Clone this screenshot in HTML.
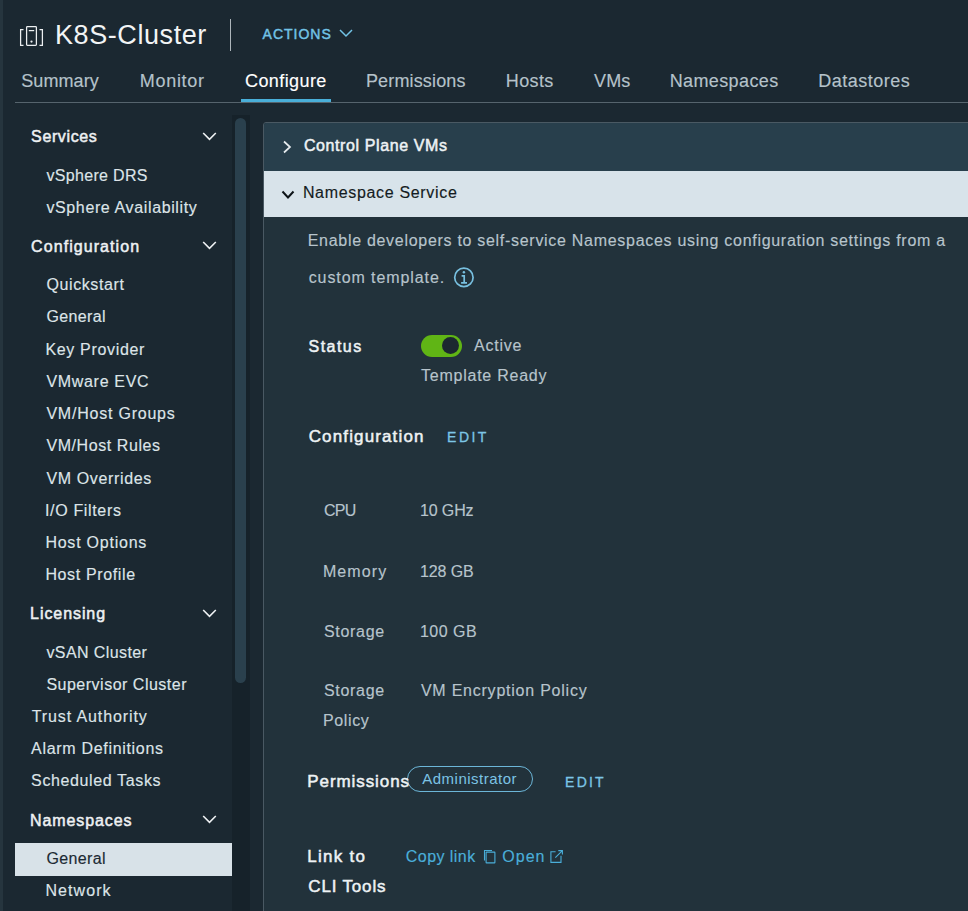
<!DOCTYPE html>
<html><head><meta charset="utf-8"><style>
html,body{margin:0;padding:0;width:968px;height:911px;overflow:hidden;background:#1b2831;font-family:"Liberation Sans", sans-serif;}
.a{position:absolute;}
.t{position:absolute;white-space:nowrap;}
</style></head><body>
<div class="a" style="left:0;top:0;width:3px;height:911px;background:#26353e"></div>
<svg class="a" style="left:0;top:0" width="60" height="60" viewBox="0 0 60 60" fill="none" stroke="#eceff1" stroke-width="1.25"><path d="M23.5 29.5H20.6V45.4H23.5"/><path d="M39.5 29.5H42.4V45.4H39.5"/><rect x="26.6" y="26.6" width="9.8" height="18.8" rx="0.8"/><path d="M28.8 30.6H34.2"/><circle cx="31.5" cy="41.6" r="1.15" fill="#eceff1" stroke="none"/></svg>
<div class="a" style="left:230px;top:19px;width:1px;height:32px;background:#aeb6bb"></div>
<svg class="a" style="left:339px;top:28.7px" width="14" height="9" viewBox="0 0 14 9" fill="none" stroke="#72c3e6" stroke-width="1.5"><path d="M1 1l6 6 6-6"/></svg>
<div class="a" style="left:15px;top:102px;width:953px;height:1px;background:#56646d"></div>
<div class="a" style="left:241px;top:99px;width:90px;height:3px;background:#49afd9"></div>
<div class="a" style="left:232px;top:115px;width:18px;height:796px;background:#16222a"></div>
<div class="a" style="left:235px;top:118px;width:11px;height:565px;border-radius:6px;background:#2a404d"></div>
<div class="a" style="left:15px;top:843px;width:217px;height:33px;background:#d8e2e8"></div>
<svg class="a" style="left:202.3px;top:132.0px" width="15" height="9" viewBox="0 0 15 9" fill="none" stroke="#eef1f3" stroke-width="1.6"><path d="M1.2 1l6.3 6.3 6.3-6.3"/></svg>
<svg class="a" style="left:202.3px;top:241.2px" width="15" height="9" viewBox="0 0 15 9" fill="none" stroke="#eef1f3" stroke-width="1.6"><path d="M1.2 1l6.3 6.3 6.3-6.3"/></svg>
<svg class="a" style="left:202.3px;top:608.7px" width="15" height="9" viewBox="0 0 15 9" fill="none" stroke="#eef1f3" stroke-width="1.6"><path d="M1.2 1l6.3 6.3 6.3-6.3"/></svg>
<svg class="a" style="left:202.3px;top:815.2px" width="15" height="9" viewBox="0 0 15 9" fill="none" stroke="#eef1f3" stroke-width="1.6"><path d="M1.2 1l6.3 6.3 6.3-6.3"/></svg>
<div class="a" style="left:263px;top:122px;width:720px;height:800px;border:1px solid #4a5963;border-radius:3px;background:#22323b;box-sizing:border-box"></div>
<div class="a" style="left:264px;top:123px;width:704px;height:48px;background:#283f4c;border-top-left-radius:2px"></div>
<div class="a" style="left:264px;top:171px;width:704px;height:46px;background:#d8e3ea"></div>
<svg class="a" style="left:282px;top:140px" width="10" height="14" viewBox="0 0 10 14" fill="none" stroke="#e6ebee" stroke-width="1.7"><path d="M2 1.5l6 5.5-6 5.5"/></svg>
<svg class="a" style="left:280.5px;top:188.5px" width="14" height="11" viewBox="0 0 14 11" fill="none" stroke="#0e1418" stroke-width="2"><path d="M1.5 2.5l5.5 6 5.5-6"/></svg>
<svg class="a" style="left:453px;top:267px" width="22" height="22" viewBox="0 0 22 22" fill="none" stroke="#78c0e0" stroke-width="1.7"><circle cx="10.9" cy="10.4" r="9.2"/><path d="M8.6 8.9H11.2V15.9M8.1 15.9H14"/><circle cx="10.9" cy="5.3" r="1.25" fill="#78c0e0" stroke="none"/></svg>
<div class="a" style="left:421px;top:335px;width:41px;height:22px;border-radius:11px;background:#60b515"></div>
<div class="a" style="left:442px;top:337px;width:17px;height:17px;border-radius:50%;background:#1c2830"></div>
<div class="a" style="left:406.5px;top:766px;width:126.5px;height:26px;border:1px solid #6cb6d8;border-radius:13px;box-sizing:border-box"></div>
<svg class="a" style="left:483px;top:849px" width="14" height="15" viewBox="0 0 14 15" fill="none" stroke="#4aaed9" stroke-width="1.1"><rect x="3.1" y="3.1" width="8.8" height="10.8" rx="0.4"/><path d="M1.5 11.4V1.5H9"/></svg>
<svg class="a" style="left:549px;top:849px" width="15" height="15" viewBox="0 0 15 15" fill="none" stroke="#4aaed9" stroke-width="1.1"><path d="M6.6 2.7H1.9V13.4H12V6.8"/><path d="M6.3 8.6L13.4 1.6M9.3 1.6H13.4V5.4"/></svg>
<span class="t" style="left:55.00px;top:18px;font-size:27px;line-height:34px;color:#f2f4f5;letter-spacing:0.574px;">K8S-Cluster</span>
<span class="t" style="left:262.60px;top:25px;font-size:14px;line-height:18px;color:#72c3e6;letter-spacing:0.985px;-webkit-text-stroke:0.45px #72c3e6;">ACTIONS</span>
<span class="t" style="left:21.20px;top:70px;font-size:18px;line-height:22px;color:#b5c2ca;letter-spacing:0.098px;-webkit-text-stroke:0.15px #b5c2ca;">Summary</span>
<span class="t" style="left:139.70px;top:70px;font-size:18px;line-height:22px;color:#b5c2ca;letter-spacing:0.729px;-webkit-text-stroke:0.15px #b5c2ca;">Monitor</span>
<span class="t" style="left:245.00px;top:70px;font-size:18px;line-height:22px;color:#ffffff;letter-spacing:0.408px;-webkit-text-stroke:0.15px #ffffff;">Configure</span>
<span class="t" style="left:365.90px;top:70px;font-size:18px;line-height:22px;color:#b5c2ca;letter-spacing:0.158px;-webkit-text-stroke:0.15px #b5c2ca;">Permissions</span>
<span class="t" style="left:505.80px;top:70px;font-size:18px;line-height:22px;color:#b5c2ca;letter-spacing:0.372px;-webkit-text-stroke:0.15px #b5c2ca;">Hosts</span>
<span class="t" style="left:594.10px;top:70px;font-size:18px;line-height:22px;color:#b5c2ca;letter-spacing:0.050px;-webkit-text-stroke:0.15px #b5c2ca;">VMs</span>
<span class="t" style="left:669.70px;top:70px;font-size:18px;line-height:22px;color:#b5c2ca;letter-spacing:0.384px;-webkit-text-stroke:0.15px #b5c2ca;">Namespaces</span>
<span class="t" style="left:818.30px;top:70px;font-size:18px;line-height:22px;color:#b5c2ca;letter-spacing:0.496px;-webkit-text-stroke:0.15px #b5c2ca;">Datastores</span>
<span class="t" style="left:31.10px;top:127px;font-size:16px;line-height:20px;color:#eef1f3;letter-spacing:0.621px;-webkit-text-stroke:0.5px #eef1f3;">Services</span>
<span class="t" style="left:31.10px;top:237px;font-size:16px;line-height:20px;color:#eef1f3;letter-spacing:1.069px;-webkit-text-stroke:0.5px #eef1f3;">Configuration</span>
<span class="t" style="left:30.10px;top:604px;font-size:16px;line-height:20px;color:#eef1f3;letter-spacing:0.925px;-webkit-text-stroke:0.5px #eef1f3;">Licensing</span>
<span class="t" style="left:30.10px;top:811px;font-size:16px;line-height:20px;color:#eef1f3;letter-spacing:0.892px;-webkit-text-stroke:0.5px #eef1f3;">Namespaces</span>
<span class="t" style="left:46.40px;top:166px;font-size:16px;line-height:20px;color:#dde4e8;letter-spacing:0.325px;-webkit-text-stroke:0.15px #dde4e8;">vSphere DRS</span>
<span class="t" style="left:46.40px;top:198px;font-size:16px;line-height:20px;color:#dde4e8;letter-spacing:0.630px;-webkit-text-stroke:0.15px #dde4e8;">vSphere Availability</span>
<span class="t" style="left:46.40px;top:275px;font-size:16px;line-height:20px;color:#dde4e8;letter-spacing:0.614px;-webkit-text-stroke:0.15px #dde4e8;">Quickstart</span>
<span class="t" style="left:46.40px;top:307px;font-size:16px;line-height:20px;color:#dde4e8;letter-spacing:0.355px;-webkit-text-stroke:0.15px #dde4e8;">General</span>
<span class="t" style="left:45.40px;top:340px;font-size:16px;line-height:20px;color:#dde4e8;letter-spacing:0.676px;-webkit-text-stroke:0.15px #dde4e8;">Key Provider</span>
<span class="t" style="left:46.40px;top:372px;font-size:16px;line-height:20px;color:#dde4e8;letter-spacing:0.692px;-webkit-text-stroke:0.15px #dde4e8;">VMware EVC</span>
<span class="t" style="left:46.40px;top:404px;font-size:16px;line-height:20px;color:#dde4e8;letter-spacing:0.780px;-webkit-text-stroke:0.15px #dde4e8;">VM/Host Groups</span>
<span class="t" style="left:46.40px;top:436px;font-size:16px;line-height:20px;color:#dde4e8;letter-spacing:0.575px;-webkit-text-stroke:0.15px #dde4e8;">VM/Host Rules</span>
<span class="t" style="left:46.40px;top:469px;font-size:16px;line-height:20px;color:#dde4e8;letter-spacing:0.646px;-webkit-text-stroke:0.15px #dde4e8;">VM Overrides</span>
<span class="t" style="left:45.00px;top:501px;font-size:16px;line-height:20px;color:#dde4e8;letter-spacing:0.656px;-webkit-text-stroke:0.15px #dde4e8;">I/O Filters</span>
<span class="t" style="left:45.40px;top:533px;font-size:16px;line-height:20px;color:#dde4e8;letter-spacing:0.765px;-webkit-text-stroke:0.15px #dde4e8;">Host Options</span>
<span class="t" style="left:45.40px;top:565px;font-size:16px;line-height:20px;color:#dde4e8;letter-spacing:0.637px;-webkit-text-stroke:0.15px #dde4e8;">Host Profile</span>
<span class="t" style="left:46.40px;top:643px;font-size:16px;line-height:20px;color:#dde4e8;letter-spacing:0.410px;-webkit-text-stroke:0.15px #dde4e8;">vSAN Cluster</span>
<span class="t" style="left:46.40px;top:675px;font-size:16px;line-height:20px;color:#dde4e8;letter-spacing:0.502px;-webkit-text-stroke:0.15px #dde4e8;">Supervisor Cluster</span>
<span class="t" style="left:31.80px;top:707px;font-size:16px;line-height:20px;color:#dde4e8;letter-spacing:0.883px;-webkit-text-stroke:0.15px #dde4e8;">Trust Authority</span>
<span class="t" style="left:31.10px;top:739px;font-size:16px;line-height:20px;color:#dde4e8;letter-spacing:0.686px;-webkit-text-stroke:0.15px #dde4e8;">Alarm Definitions</span>
<span class="t" style="left:31.10px;top:771px;font-size:16px;line-height:20px;color:#dde4e8;letter-spacing:0.624px;-webkit-text-stroke:0.15px #dde4e8;">Scheduled Tasks</span>
<span class="t" style="left:46.40px;top:849px;font-size:16px;line-height:20px;color:#1c2a33;letter-spacing:0.355px;-webkit-text-stroke:0.15px #1c2a33;">General</span>
<span class="t" style="left:45.40px;top:881px;font-size:16px;line-height:20px;color:#dde4e8;letter-spacing:1.087px;-webkit-text-stroke:0.15px #dde4e8;">Network</span>
<span class="t" style="left:303.90px;top:136px;font-size:16px;line-height:20px;color:#eef2f4;letter-spacing:0.601px;-webkit-text-stroke:0.5px #eef2f4;">Control Plane VMs</span>
<span class="t" style="left:302.90px;top:183px;font-size:16px;line-height:20px;color:#141c22;letter-spacing:0.670px;-webkit-text-stroke:0.15px #141c22;">Namespace Service</span>
<span class="t" style="left:307.70px;top:231px;font-size:16px;line-height:20px;color:#b7c4cc;letter-spacing:0.706px;-webkit-text-stroke:0.15px #b7c4cc;">Enable developers to self-service Namespaces using configuration settings from a</span>
<span class="t" style="left:308.70px;top:268px;font-size:16px;line-height:20px;color:#b7c4cc;letter-spacing:0.908px;-webkit-text-stroke:0.15px #b7c4cc;">custom template.</span>
<span class="t" style="left:308.60px;top:337px;font-size:16px;line-height:20px;color:#eef2f4;letter-spacing:1.448px;-webkit-text-stroke:0.5px #eef2f4;">Status</span>
<span class="t" style="left:474.00px;top:336px;font-size:16px;line-height:20px;color:#b7c4cc;letter-spacing:0.766px;-webkit-text-stroke:0.15px #b7c4cc;">Active</span>
<span class="t" style="left:421.00px;top:366px;font-size:16px;line-height:20px;color:#b7c4cc;letter-spacing:0.760px;-webkit-text-stroke:0.15px #b7c4cc;">Template Ready</span>
<span class="t" style="left:308.70px;top:426px;font-size:17px;line-height:21px;color:#eef2f4;letter-spacing:1.136px;-webkit-text-stroke:0.5px #eef2f4;">Configuration</span>
<span class="t" style="left:447.10px;top:428px;font-size:14px;line-height:18px;color:#7cc6e6;letter-spacing:2.454px;-webkit-text-stroke:0.3px #7cc6e6;">EDIT</span>
<span class="t" style="left:323.90px;top:501px;font-size:16px;line-height:20px;color:#b7c4cc;letter-spacing:-0.663px;-webkit-text-stroke:0.15px #b7c4cc;">CPU</span>
<span class="t" style="left:419.90px;top:501px;font-size:16px;line-height:20px;color:#b7c4cc;letter-spacing:-0.108px;-webkit-text-stroke:0.15px #b7c4cc;">10 GHz</span>
<span class="t" style="left:322.90px;top:562px;font-size:16px;line-height:20px;color:#b7c4cc;letter-spacing:1.104px;-webkit-text-stroke:0.15px #b7c4cc;">Memory</span>
<span class="t" style="left:419.90px;top:562px;font-size:16px;line-height:20px;color:#b7c4cc;letter-spacing:-0.097px;-webkit-text-stroke:0.15px #b7c4cc;">128 GB</span>
<span class="t" style="left:323.90px;top:622px;font-size:16px;line-height:20px;color:#b7c4cc;letter-spacing:0.710px;-webkit-text-stroke:0.15px #b7c4cc;">Storage</span>
<span class="t" style="left:419.90px;top:622px;font-size:16px;line-height:20px;color:#b7c4cc;letter-spacing:0.523px;-webkit-text-stroke:0.15px #b7c4cc;">100 GB</span>
<span class="t" style="left:323.90px;top:681px;font-size:16px;line-height:20px;color:#b7c4cc;letter-spacing:0.710px;-webkit-text-stroke:0.15px #b7c4cc;">Storage</span>
<span class="t" style="left:420.90px;top:681px;font-size:16px;line-height:20px;color:#b7c4cc;letter-spacing:0.770px;-webkit-text-stroke:0.15px #b7c4cc;">VM Encryption Policy</span>
<span class="t" style="left:322.90px;top:711px;font-size:16px;line-height:20px;color:#b7c4cc;letter-spacing:0.644px;-webkit-text-stroke:0.15px #b7c4cc;">Policy</span>
<span class="t" style="left:307.30px;top:771px;font-size:17px;line-height:21px;color:#eef2f4;letter-spacing:0.912px;-webkit-text-stroke:0.5px #eef2f4;">Permissions</span>
<span class="t" style="left:422.30px;top:769px;font-size:15px;line-height:19px;color:#7cc3e4;letter-spacing:0.486px;">Administrator</span>
<span class="t" style="left:565.10px;top:773px;font-size:14px;line-height:18px;color:#7cc6e6;letter-spacing:2.221px;-webkit-text-stroke:0.3px #7cc6e6;">EDIT</span>
<span class="t" style="left:307.30px;top:846px;font-size:17px;line-height:21px;color:#eef2f4;letter-spacing:1.261px;-webkit-text-stroke:0.5px #eef2f4;">Link to</span>
<span class="t" style="left:308.30px;top:876px;font-size:17px;line-height:21px;color:#eef2f4;letter-spacing:0.830px;-webkit-text-stroke:0.5px #eef2f4;">CLI Tools</span>
<span class="t" style="left:405.80px;top:847px;font-size:16px;line-height:20px;color:#4aaed9;letter-spacing:0.449px;-webkit-text-stroke:0.15px #4aaed9;">Copy link</span>
<span class="t" style="left:502.30px;top:847px;font-size:16px;line-height:20px;color:#4aaed9;letter-spacing:1.019px;-webkit-text-stroke:0.15px #4aaed9;">Open</span>
</body></html>
